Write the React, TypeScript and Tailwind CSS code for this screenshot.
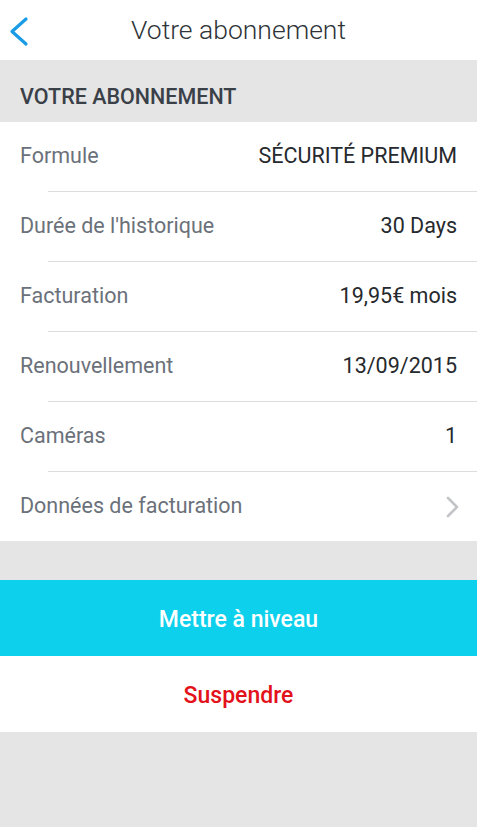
const rows: { label: string; value?: string; link?: boolean }[] = [
  { label: "Formule", value: "SÉCURITÉ PREMIUM" },
  { label: "Durée de l'historique", value: "30 Days" },
  { label: "Facturation", value: "19,95€ mois" },
  { label: "Renouvellement", value: "13/09/2015" },
  { label: "Caméras", value: "1" },
  { label: "Données de facturation", link: true },
];

export default function App() {
  return (
    <div
      className="flex min-h-[827px] w-[477px] flex-col bg-[#e5e5e5]"
      style={{ fontFamily: "Roboto, 'Liberation Sans', sans-serif" }}
    >
      {/* header */}
      <div className="relative flex h-[60px] items-center justify-center bg-white">
        <svg
          className="absolute left-[8px] top-[16px]"
          width="22"
          height="31"
          viewBox="0 0 22 31"
          fill="none"
        >
          <polyline
            points="18,3 4,15.5 18,28"
            stroke="#1a9be6"
            strokeWidth="3.2"
            strokeLinecap="round"
            strokeLinejoin="round"
          />
        </svg>
        <span className="text-[26.5px] font-light text-[#2e3338]">
          Votre abonnement
        </span>
      </div>

      {/* section title */}
      <div className="flex h-[62px] items-center px-[20px] pt-[12px]">
        <span className="text-[21.5px] font-medium text-[#3a4048]">
          VOTRE ABONNEMENT
        </span>
      </div>

      {/* rows */}
      <div className="bg-white">
        {rows.map((r, i) => (
          <div key={r.label}>
            <div className="flex h-[69px] items-center justify-between px-[20px]">
              <span className="text-[21.5px] text-[#6b717a]">{r.label}</span>
              {r.link ? (
                <svg width="16" height="24" viewBox="0 0 16 24" fill="none" className="mr-[-4px]">
                  <polyline
                    points="3,3 12,12 3,21"
                    stroke="#c2c4c7"
                    strokeWidth="2.6"
                    strokeLinecap="round"
                    strokeLinejoin="round"
                  />
                </svg>
              ) : (
                <span className="text-[21.5px] text-[#26292d]">{r.value}</span>
              )}
            </div>
            {i < rows.length - 1 && <div className="ml-[48px] h-px bg-[#dcdcdc]" />}
          </div>
        ))}
      </div>

      <div className="h-[39px]" />

      <button className="flex h-[76px] items-center justify-center bg-[#0dd0ec] pt-[4px] text-[23px] font-medium text-white">
        Mettre à niveau
      </button>
      <button className="flex h-[76px] items-center justify-center bg-white pt-[4px] text-[23px] font-medium text-[#e3111a]">
        Suspendre
      </button>
    </div>
  );
}
